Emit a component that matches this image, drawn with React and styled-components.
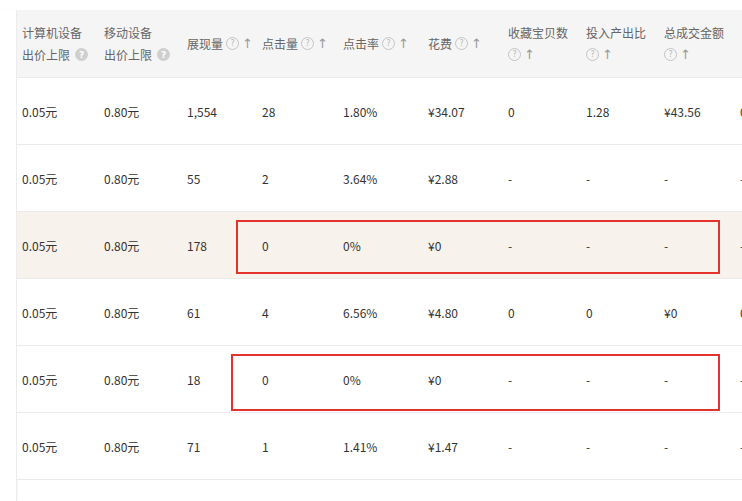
import React from "react";
import styled, { createGlobalStyle } from "styled-components";

const Global = createGlobalStyle`
  body { margin: 0; background: #fff; font-family: "Noto Sans CJK SC", "Noto Sans", sans-serif; }
`;

const Page = styled.div`
  position: relative;
  width: 742px;
  height: 501px;
  overflow: hidden;
  padding-top: 10px;
  box-sizing: border-box;
  display: flex;
`;
const Gutter = styled.div`
  width: 16px;
  flex: none;
  border-right: 1px solid #ececec;
  box-shadow: 1px 0 2px rgba(0,0,0,0.04);
`;
const Table = styled.div`
  flex: 1;
  display: flex;
  flex-direction: column;
`;
const cols = "82px 83px 75px 81px 85px 80px 78px 78px 76px 40px";
const Row = styled.div`
  display: grid;
  grid-template-columns: ${cols};
  align-items: center;
  height: ${p => (p.$head ? "67px" : "66px")};
  padding-left: 5px;
  background: ${p => (p.$head ? "#f5f5f5" : p.$hl ? "#f8f2ec" : "#fff")};
  border-bottom: 1px solid #ebebeb;
  font-size: 12px;
  color: ${p => (p.$head ? "#666" : "#333")};
  white-space: nowrap;
`;
const HeadCell = styled.div`
  display: flex;
  flex-direction: column;
  gap: 6px;
  line-height: 16px;
`;
const Line = styled.div`
  display: flex;
  align-items: center;
  gap: 3px;
`;
const Filled = styled.span`
  display: inline-flex; align-items: center; justify-content: center;
  width: 13px; height: 13px; border-radius: 50%; margin-left: 2px;
  background: #cfcfcf; color: #fff; font-size: 9px; font-weight: bold;
  font-family: "DejaVu Sans", sans-serif;
`;
const Outline = styled.span`
  display: inline-flex; align-items: center; justify-content: center;
  width: 11px; height: 11px; border-radius: 50%;
  border: 1px solid #c4c4c4; color: #b8b8b8; font-size: 8px;
  font-family: "DejaVu Sans", sans-serif;
`;
const Arrow = styled.span`
  color: #999; font-size: 13px; font-family: "DejaVu Sans", sans-serif;
  font-variant-emoji: text;
`;
const Cell = styled.div``;
const Box = styled.div`
  position: absolute;
  border: 2px solid #e5322d;
  box-sizing: border-box;
`;

const head = [
  [["计算机设备"], ["出价上限", "f"]],
  [["移动设备"], ["出价上限", "f"]],
  [["展现量", "o"]],
  [["点击量", "o"]],
  [["点击率", "o"]],
  [["花费", "o"]],
  [["收藏宝贝数"], ["", "o"]],
  [["投入产出比"], ["", "o"]],
  [["总成交金额"], ["", "o"]],
  [],
];
const rows = [
  ["0.05元", "0.80元", "1,554", "28", "1.80%", "¥34.07", "0", "1.28", "¥43.56", "0"],
  ["0.05元", "0.80元", "55", "2", "3.64%", "¥2.88", "-", "-", "-", "-"],
  ["0.05元", "0.80元", "178", "0", "0%", "¥0", "-", "-", "-", "-"],
  ["0.05元", "0.80元", "61", "4", "6.56%", "¥4.80", "0", "0", "¥0", "0"],
  ["0.05元", "0.80元", "18", "0", "0%", "¥0", "-", "-", "-", "-"],
  ["0.05元", "0.80元", "71", "1", "1.41%", "¥1.47", "-", "-", "-", "-"],
];

export default function App() {
  return (
    <Page>
      <Global />
      <Gutter />
      <Table>
        <Row $head>
          {head.map((h, i) => (
            <HeadCell key={i}>
              {h.map(([t, k], j) => (
                <Line key={j}>
                  {t}
                  {k === "f" && <Filled>?</Filled>}
                  {k === "o" && (<><Outline>?</Outline><Arrow>{"\u2191\uFE0E"}</Arrow></>)}
                </Line>
              ))}
            </HeadCell>
          ))}
        </Row>
        {rows.map((r, i) => (
          <Row key={i} $hl={i === 2}>
            {r.map((c, j) => <Cell key={j}>{c}</Cell>)}
          </Row>
        ))}
      </Table>
      <Box style={{ left: 236, top: 220, width: 484, height: 54 }} />
      <Box style={{ left: 231, top: 354, width: 489, height: 57 }} />
    </Page>
  );
}
